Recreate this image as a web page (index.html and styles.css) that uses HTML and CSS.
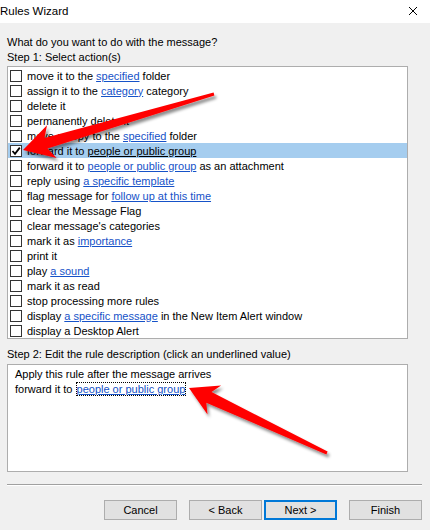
FILE: index.html
```html
<!DOCTYPE html>
<html lang="en">
<head>
    <meta charset="UTF-8">
    <meta name="viewport" content="width=device-width, initial-scale=1.0">
    <title>Rules Wizard</title>
    <link rel="stylesheet" href="styles.css">
</head>
<body>
    <div class="window">
        <div class="titlebar">
            <span class="title">Rules Wizard</span>
            <svg class="close" width="10" height="10" viewBox="0 0 10 10">
                <path d="M1 1 L9 9 M9 1 L1 9" stroke="#000" stroke-width="1" fill="none"/>
            </svg>
        </div>

        <div class="content">
            <div class="label">What do you want to do with the message?</div>
            <div class="label">Step 1: Select action(s)</div>

            <div class="actions">
                <div class="row"><span class="box"></span><span>move it to the <a>specified</a> folder</span></div>
                <div class="row"><span class="box"></span><span>assign it to the <a>category</a> category</span></div>
                <div class="row"><span class="box"></span><span>delete it</span></div>
                <div class="row"><span class="box"></span><span>permanently delete it</span></div>
                <div class="row"><span class="box"></span><span>move a copy to the <a>specified</a> folder</span></div>
                <div class="row selected">
                    <span class="box">
                        <svg width="10" height="10" viewBox="0 0 10 10">
                            <path d="M1.5 5 L4 7.8 L8.8 1.6" stroke="#000" stroke-width="1.8" fill="none"/>
                        </svg>
                    </span>
                    <span>forward it to <a>people or public group</a></span>
                </div>
                <div class="row"><span class="box"></span><span>forward it to <a>people or public group</a> as an attachment</span></div>
                <div class="row"><span class="box"></span><span>reply using <a>a specific template</a></span></div>
                <div class="row"><span class="box"></span><span>flag message for <a>follow up at this time</a></span></div>
                <div class="row"><span class="box"></span><span>clear the Message Flag</span></div>
                <div class="row"><span class="box"></span><span>clear message's categories</span></div>
                <div class="row"><span class="box"></span><span>mark it as <a>importance</a></span></div>
                <div class="row"><span class="box"></span><span>print it</span></div>
                <div class="row"><span class="box"></span><span>play <a>a sound</a></span></div>
                <div class="row"><span class="box"></span><span>mark it as read</span></div>
                <div class="row"><span class="box"></span><span>stop processing more rules</span></div>
                <div class="row"><span class="box"></span><span>display <a>a specific message</a> in the New Item Alert window</span></div>
                <div class="row"><span class="box"></span><span>display a Desktop Alert</span></div>
            </div>

            <div class="label step2">Step 2: Edit the rule description (click an underlined value)</div>
            <div class="description">
                <div>Apply this rule after the message arrives</div>
                <div>forward it to <a class="focused">people or public group</a></div>
            </div>

            <div class="separator"></div>

            <div class="buttons">
                <button class="btn">Cancel</button>
                <button class="btn spaced">&lt; Back</button>
                <button class="btn default">Next &gt;</button>
                <button class="btn spaced">Finish</button>
            </div>
        </div>

        <!-- red callout arrows drawn over the dialog -->
        <svg class="arrows" width="430" height="530" viewBox="0 0 430 530">
            <defs>
                <filter id="shade" x="-10%" y="-20%" width="130%" height="150%">
                    <feDropShadow dx="2" dy="3" stdDeviation="1.5" flood-color="#000" flood-opacity="0.45"/>
                </filter>
            </defs>
            <polygon filter="url(#shade)" fill="#f00"
                points="23,150 47,125.3 44.5,138 213.6,92.6 214.4,95.4 47.5,148.6 56.6,157.9"/>
            <polygon filter="url(#shade)" fill="#f00"
                points="189,388 221.1,385.4 211.5,392 327.6,451.6 326.4,454.4 206.3,402.8 207.5,414.4"/>
        </svg>
    </div>
</body>
</html>
```

FILE: styles.css
```css
* {
    margin: 0;
    padding: 0;
    box-sizing: border-box;
}

body {
    width: 430px;
    height: 530px;
    overflow: hidden;
    background: #f0f0f0;
    font-family: 'Liberation Sans', Arial, sans-serif;
    font-size: 11px;
    color: #000;
}

.window {
    position: relative;
    width: 430px;
    height: 530px;
}

.titlebar {
    height: 23px;
    background: #fff;
    display: flex;
    align-items: center;
    justify-content: space-between;
    padding: 0 8px 1px 0;
}

.title {
    font-size: 11.5px;
}

.close {
    margin-right: 4px;
}

.content {
    padding: 12px 8px 0 7px;
}

.label {
    line-height: 15px;
    white-space: nowrap;
}

a {
    color: #1652c8;
    text-decoration: underline;
}

.actions {
    width: 401px;
    height: 273px;
    margin-top: 1px;
    padding-top: 1px;
    background: #fff;
    border: 1px solid #adadad;
}

.row {
    height: 15px;
    display: flex;
    align-items: center;
    gap: 5px;
    padding-left: 2px;
    white-space: nowrap;
}

.row.selected {
    background: #a5cdef;
}

.row.selected a {
    color: #000;
}

.box {
    width: 12px;
    height: 12px;
    border: 1px solid #333;
    background: #fff;
    display: flex;
    align-items: center;
    justify-content: center;
}

.step2 {
    margin-top: 8px;
}

.description {
    width: 401px;
    height: 108px;
    margin-top: 2px;
    padding: 2px 7px;
    background: #fff;
    border: 1px solid #adadad;
    line-height: 15px;
}

.focused {
    outline: 1px dotted #000;
    outline-offset: 0;
    margin-left: 1px;
}

.separator {
    width: 415px;
    margin-top: 12px;
    border-top: 1px solid #a0a0a0;
    border-bottom: 1px solid #fff;
}

.buttons {
    width: 415px;
    margin-top: 14px;
    display: flex;
    justify-content: flex-end;
}

.btn {
    width: 73px;
    height: 20px;
    margin-left: 2px;
    background: #e1e1e1;
    border: 1px solid #adadad;
    font-family: inherit;
    font-size: 11px;
    color: #000;
}

.btn.spaced {
    margin-left: 12px;
}

.btn.default {
    border: 2px solid #0078d7;
}

.arrows {
    position: absolute;
    top: 0;
    left: 0;
    pointer-events: none;
}
```
